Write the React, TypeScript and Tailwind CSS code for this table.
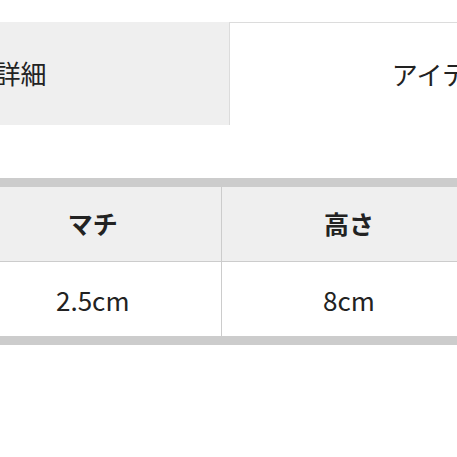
const font = { fontFamily: '"Noto Sans CJK JP", "Noto Sans", sans-serif' };

export default function App() {
    return (
        <main className="w-[457px] h-[457px] overflow-hidden bg-white text-[#222]" style={font}>
            {/* Tabs */}
            <div className="flex mt-[22px] ml-[-255px] w-[968px]">
                <div className="w-[484px] h-[103px] bg-[#efefef] flex items-center justify-center text-[26px] pb-[2px] pr-[10px]">
                    サイズ詳細
                </div>
                <div className="w-[478px] h-[103px] bg-white border-t border-l border-[#dcdcdc] flex items-center justify-center text-[26px] pb-[2px]">
                    アイテム詳細
                </div>
            </div>

            {/* Size table */}
            <table className="mt-[53px] ml-[-35px] w-[768px] border-collapse table-fixed">
                <thead>
                    <tr className="border-t-[9px] border-[#cccccc]">
                        {['マチ', '高さ', '重さ'].map((h, i) => (
                            <th
                                key={h}
                                className={`w-[256px] h-[79px] bg-[#efefef] text-[25px] font-bold text-center border-b border-[#cccccc] ${i > 0 ? 'border-l' : ''}`}
                            >
                                {h}
                            </th>
                        ))}
                    </tr>
                </thead>
                <tbody>
                    <tr className="border-b-[9px] border-[#cccccc]">
                        {['2.5cm', '8cm', '100g'].map((v, i) => (
                            <td
                                key={v}
                                className={`h-[79px] text-[26px] text-center border-[#cccccc] ${i > 0 ? 'border-l' : ''}`}
                            >
                                {v}
                            </td>
                        ))}
                    </tr>
                </tbody>
            </table>
        </main>
    );
}
